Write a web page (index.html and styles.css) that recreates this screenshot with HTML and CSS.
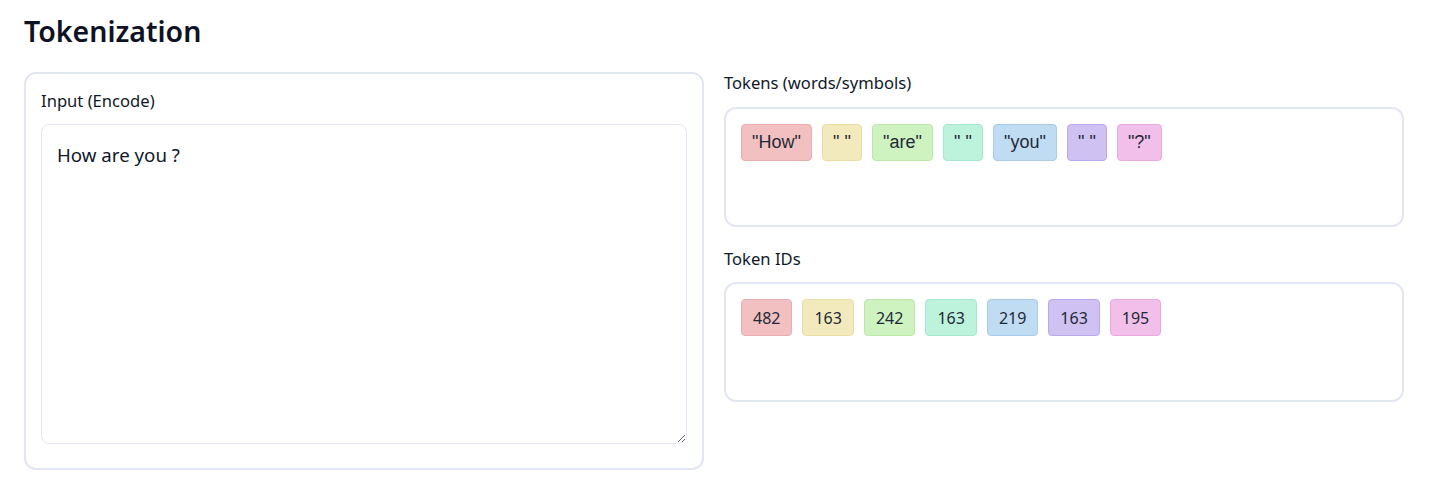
FILE: index.html
```html
<!DOCTYPE html>
<html>
<head>
<meta charset="utf-8">
<link rel="stylesheet" href="styles.css">
</head>
<body>
<div class="page">
  <h1 class="title">Tokenization</h1>
  <div class="grid">
    <div class="card">
      <div class="label">Input (Encode)</div>
      <textarea class="input">How are you ?</textarea>
    </div>
    <div class="col">
      <div class="section">
        <div class="label">Tokens (words/symbols)</div>
        <div class="box">
          <span class="chip tok c1">"How"</span>
          <span class="chip tok c2">" "</span>
          <span class="chip tok c3">"are"</span>
          <span class="chip tok c4">" "</span>
          <span class="chip tok c5">"you"</span>
          <span class="chip tok c6">" "</span>
          <span class="chip tok c7">"?"</span>
        </div>
      </div>
      <div class="section">
        <div class="label">Token IDs</div>
        <div class="box">
          <span class="chip id c1">482</span>
          <span class="chip id c2">163</span>
          <span class="chip id c3">242</span>
          <span class="chip id c4">163</span>
          <span class="chip id c5">219</span>
          <span class="chip id c6">163</span>
          <span class="chip id c7">195</span>
        </div>
      </div>
    </div>
  </div>
</div>
</body>
</html>
```
FILE: styles.css
```css
* { box-sizing: border-box; }
body {
  margin: 0;
  background: #ffffff;
  font-family: "Noto Sans", "Open Sans", sans-serif;
  color: #111827;
}
.page {
  padding: 12px 24px 0 24px;
}
.title {
  margin: 0 0 22px 0;
  font-size: 28.5px;
  line-height: 38px;
  font-weight: 600;
  color: #0f1222;
}
.grid {
  display: grid;
  grid-template-columns: 680px 680px;
  column-gap: 20px;
}
.card {
  border: 2px solid #e2e6f0;
  border-radius: 12px;
  padding: 16px 15px 24px 15px;
  height: 398px;
  display: flex;
  flex-direction: column;
}
.label {
  font-size: 16.6px;
  line-height: 22px;
  color: #111827;
}
.card .label {
  margin-bottom: 12px;
}
.input {
  flex: 1;
  width: 100%;
  border: 1px solid #e2e6f0;
  border-radius: 8px;
  padding: 17px 15px;
  font-family: "Noto Sans", "Open Sans", sans-serif;
  font-size: 18.7px;
  line-height: 26px;
  color: #111827;
  resize: vertical;
  outline: none;
}
.col {
  display: flex;
  flex-direction: column;
  gap: 21px;
}
.section .label {
  margin-bottom: 13px;
}
.section + .section .label {
  margin-bottom: 12px;
}
.box {
  border: 2px solid #e2e6f0;
  border-radius: 12px;
  height: 120px;
  padding: 15px 15px;
  display: flex;
  flex-wrap: wrap;
  align-content: flex-start;
  gap: 10px;
}
.chip {
  display: inline-flex;
  align-items: center;
  justify-content: center;
  height: 37px;
  border-radius: 4px;
  border: 1px solid;
  color: #1f2937;
}
.tok {
  font-family: "Liberation Sans", Arial, sans-serif;
  font-size: 18px;
  padding: 0 10.1px;
}
.id {
  font-family: "Noto Sans", "Open Sans", sans-serif;
  font-size: 16px;
  padding: 0 11px;
}
.c1 { background: #f2c0c0; border-color: #e9aeb0; }
.c2 { background: #f2e9bd; border-color: #e9dca6; }
.c3 { background: #cef2c0; border-color: #b9e8a8; }
.c4 { background: #bdf2dd; border-color: #a6e6cd; }
.c5 { background: #bfdcf2; border-color: #a8cce9; }
.c6 { background: #cfc1f2; border-color: #baa9ea; }
.c7 { background: #f2bfea; border-color: #e8a9df; }
```
